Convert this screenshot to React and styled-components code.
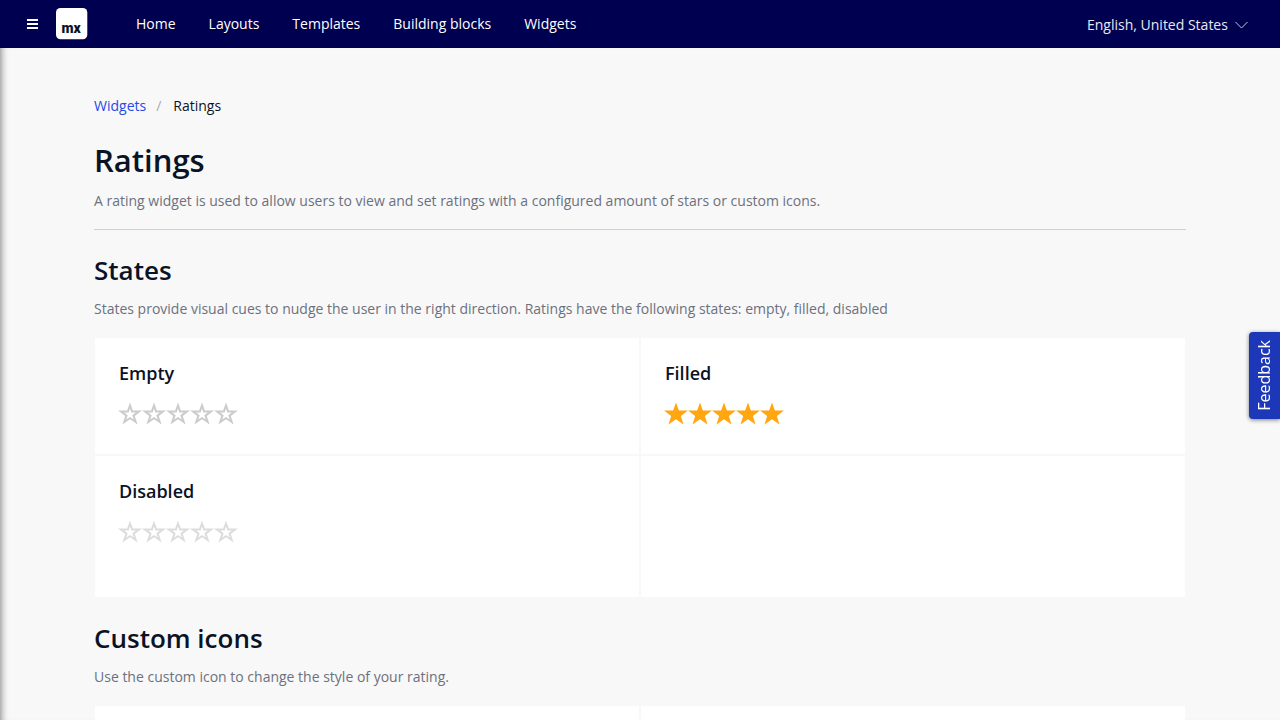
import React from "react";
import styled, { createGlobalStyle } from "styled-components";

const GlobalStyle = createGlobalStyle`
  *, *::before, *::after { box-sizing: border-box; }
  body {
    margin: 0;
    background: #f8f8f8;
    color: #0a1325;
    font: 14px/20px "Open Sans", "Noto Sans", sans-serif;
  }
  h1, h2, h3, p { margin: 0; }
`;

const Shell = styled.div`
  display: flex;
  flex-direction: column;
  height: 100vh;
  overflow: hidden;
`;

const TopBar = styled.header`
  display: flex;
  align-items: center;
  flex: none;
  height: 48px;
  padding: 0 32px 0 24px;
  background: #000050;
  color: #fff;
`;

const MenuButton = styled.button`
  display: flex;
  padding: 0;
  border: 0;
  background: none;
  color: inherit;
  cursor: pointer;
`;

const LogoLink = styled.a`
  display: flex;
  margin: 0 32px 0 16px;
`;

const TopNav = styled.nav`
  display: flex;
  flex: 1;
`;

const NavLink = styled.a`
  padding: 0 17px 0 16px;
  color: inherit;
  text-decoration: none;
`;

const LanguagePicker = styled.label`
  display: flex;
  align-items: center;
  gap: 7px;
  padding-top: 2px;
`;

const LanguageSelect = styled.select`
  appearance: none;
  padding: 0;
  border: 0;
  background: transparent;
  color: #e8e8f2;
  font: inherit;
`;

const Body = styled.div`
  display: flex;
  flex: 1;
  min-height: 0;
  box-shadow: inset 8px 0 8px -8px rgba(0, 0, 0, 0.6);
`;

const Main = styled.main`
  flex: 1;
  padding: 48px 94px;
  overflow-y: auto;
  scrollbar-width: none;
`;

const Breadcrumb = styled.nav`
  display: flex;
  margin-bottom: 24px;
`;

const CrumbLink = styled.a`
  color: #264ae5;
  text-decoration: none;
`;

const CrumbDivider = styled.span`
  padding: 0 12px 0 10px;
  color: #a9acb3;
`;

const PageHeader = styled.header`
  padding-bottom: 18px;
  border-bottom: 1px solid #ced0d3;
`;

const PageTitle = styled.h1`
  margin-bottom: 11px;
  font-size: 31px;
  font-weight: 600;
  line-height: 40px;
`;

const Section = styled.section`
  margin-top: 24px;
`;

const SectionTitle = styled.h2`
  margin-bottom: 12px;
  font-size: 26px;
  font-weight: 600;
  line-height: 33px;
`;

const Description = styled.p`
  color: #6c717e;
`;

const CardGrid = styled.div`
  display: grid;
  grid-template-columns: 1fr 1fr;
  gap: 2px;
  margin-top: 19px;
  padding: 0 1px 1px;
`;

const Card = styled.article`
  padding: 23px 24px ${(p) => (p.$last ? "53px" : "28px")};
  background: #fff;
`;

const CardTitle = styled.h3`
  margin-bottom: 17px;
  font-size: 18px;
  font-weight: 600;
  line-height: 24px;
`;

const Stars = styled.fieldset`
  display: flex;
  min-width: 0;
  margin: 0 0 0 -1px;
  padding: 0;
  border: 0;
  opacity: ${(p) => (p.disabled ? 0.65 : 1)};
`;

const StarLabel = styled.label`
  position: relative;
  display: flex;
  width: 24px;
  height: 24px;
  color: ${(p) => (p.$filled ? "#ffa611" : "#ccc")};
`;

const StarInput = styled.input`
  position: absolute;
  inset: 0;
  width: 100%;
  height: 100%;
  margin: 0;
  opacity: 0;
`;

const FeedbackButton = styled.button`
  position: fixed;
  top: 332px;
  right: 0;
  padding: 8px 5px 8px 4px;
  border: 0;
  border-radius: 4px 0 0 4px;
  background: #1c38b8;
  box-shadow: 0 1px 4px rgba(0, 0, 0, 0.5);
  color: #fff;
  font: 16px/22px "Open Sans", "Noto Sans", sans-serif;
  writing-mode: vertical-rl;
  cursor: pointer;
`;

const FeedbackText = styled.span`
  display: block;
  transform: rotate(180deg);
`;

const navItems = ["Home", "Layouts", "Templates", "Building blocks", "Widgets"];

function Star({ filled }) {
  return (
    <svg width="24" height="24" viewBox="0 0 24 24" aria-hidden="true">
      {filled ? (
        <path fill="currentColor" d="M12 0.6 14.9 8.5H24L16.8 13.9 19.6 22.4 12 17.3 4.4 22.4 7.2 13.9 0 8.5H9.1Z" />
      ) : (
        <path
          fill="currentColor"
          fillRule="evenodd"
          d="M12 0.6 14.9 8.5H24L16.8 13.9 19.6 22.4 12 17.3 4.4 22.4 7.2 13.9 0 8.5H9.1ZM12 6.4 10.6 10.5H6.2L9.7 13.2 8.2 17.4 12 14.9 15.8 17.4 14.3 13.2 17.8 10.5H13.4Z"
        />
      )}
    </svg>
  );
}

function Rating({ name, value = 0, disabled = false }) {
  return (
    <Stars disabled={disabled} aria-label={name}>
      {[1, 2, 3, 4, 5].map((n) => (
        <StarLabel key={n} $filled={n <= value}>
          <StarInput type="radio" name={name} value={n} defaultChecked={n === value} aria-label={`${n} stars`} />
          <Star filled={n <= value} />
        </StarLabel>
      ))}
    </Stars>
  );
}

export default function App() {
  return (
    <Shell>
      <GlobalStyle />
      <TopBar>
        <MenuButton aria-label="Toggle menu">
          <svg width="16" height="16" viewBox="0 0 16 16" fill="currentColor" aria-hidden="true">
            <path d="M3 3h11v2H3zM3 7h11v2H3zM3 11h11v2H3z" />
          </svg>
        </MenuButton>
        <LogoLink href="#home" aria-label="Mendix">
          <svg width="32" height="32" viewBox="0 0 32 32" aria-hidden="true">
            <rect width="31.3" height="31.3" rx="4.5" fill="#fff" />
            <text x="5.5" y="25.4" fill="#0a1325" fontFamily="Roboto, sans-serif" fontWeight="900" fontSize="14">mx</text>
          </svg>
        </LogoLink>
        <TopNav>
          {navItems.map((item) => (
            <NavLink key={item} href="#">{item}</NavLink>
          ))}
        </TopNav>
        <LanguagePicker>
          <LanguageSelect aria-label="Language">
            <option>English, United States</option>
          </LanguageSelect>
          <svg width="13" height="8" viewBox="0 0 13 8" fill="none" stroke="#c6c6dc" aria-hidden="true">
            <path d="M0.5 1 6.5 7 12.5 1" />
          </svg>
        </LanguagePicker>
      </TopBar>
      <Body>
        <Main>
          <Breadcrumb aria-label="Breadcrumb">
            <CrumbLink href="#widgets">Widgets</CrumbLink>
            <CrumbDivider>/</CrumbDivider>
            <span>Ratings</span>
          </Breadcrumb>
          <PageHeader>
            <PageTitle>Ratings</PageTitle>
            <Description>
              A rating widget is used to allow users to view and set ratings with a configured amount of stars or custom icons.
            </Description>
          </PageHeader>
          <Section>
            <SectionTitle>States</SectionTitle>
            <Description>
              States provide visual cues to nudge the user in the right direction. Ratings have the following states: empty, filled, disabled
            </Description>
            <CardGrid>
              <Card>
                <CardTitle>Empty</CardTitle>
                <Rating name="Empty" />
              </Card>
              <Card>
                <CardTitle>Filled</CardTitle>
                <Rating name="Filled" value={5} />
              </Card>
              <Card $last>
                <CardTitle>Disabled</CardTitle>
                <Rating name="Disabled" disabled />
              </Card>
              <Card $last />
            </CardGrid>
          </Section>
          <Section>
            <SectionTitle>Custom icons</SectionTitle>
            <Description>Use the custom icon to change the style of your rating.</Description>
            <CardGrid>
              <Card />
              <Card />
            </CardGrid>
          </Section>
        </Main>
      </Body>
      <FeedbackButton>
        <FeedbackText>Feedback</FeedbackText>
      </FeedbackButton>
    </Shell>
  );
}
